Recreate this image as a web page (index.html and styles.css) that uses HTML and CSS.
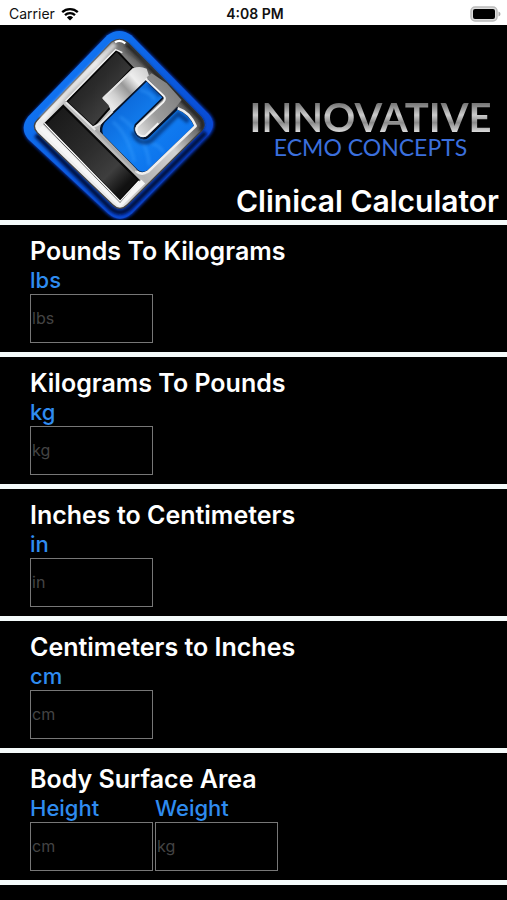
FILE: index.html
```html
<!DOCTYPE html>
<html lang="en">
<head>
    <meta charset="UTF-8">
    <meta name="viewport" content="width=device-width, initial-scale=1.0">
    <title>Clinical Calculator</title>
    <link rel="stylesheet" href="styles.css">
</head>
<body>
    <div class="status-bar">
        <div class="carrier">
            <span>Carrier</span>
            <svg width="18" height="14" viewBox="0 0 18 14" aria-hidden="true">
                <path d="M1.2 5.2a11.2 11.2 0 0 1 15.6 0M4 8.2a7.2 7.2 0 0 1 10 0" fill="none" stroke="#000" stroke-width="2.3"/>
                <path d="M5.9 10.4a4.5 4.5 0 0 1 6.2 0L9 13.6z"/>
            </svg>
        </div>
        <div class="time">4:08 PM</div>
        <div class="battery">
            <svg width="31" height="16" viewBox="0 0 31 16" aria-hidden="true">
                <rect x="1" y="1" width="26" height="14" rx="4" fill="#ddd" stroke="#bbb" stroke-width="1.5"/>
                <rect x="3" y="3" width="22" height="10" rx="2"/>
                <path d="M28.500 5.500q2 .8 2 2.500t-2 2.500z" fill="#aaa"/>
            </svg>
        </div>
    </div>

    <header class="header">
        <svg class="logo" viewBox="0 75 690 585" role="img" aria-label="Innovative ECMO Concepts">
            <defs>
                <linearGradient id="rim" x1="0" y1="0" x2="1" y2="1">
                    <stop offset="0" stop-color="#1687ff"/>
                    <stop offset=".5" stop-color="#0a5be0"/>
                    <stop offset="1" stop-color="#0638c8"/>
                </linearGradient>
                <linearGradient id="chrome" gradientUnits="userSpaceOnUse" x1="230" y1="520" x2="530" y2="250">
                    <stop offset="0" stop-color="#f2f2f2"/>
                    <stop offset=".35" stop-color="#b4b4b4"/>
                    <stop offset=".65" stop-color="#d2d2d2"/>
                    <stop offset=".82" stop-color="#858585"/>
                    <stop offset="1" stop-color="#3c3c3c"/>
                </linearGradient>
                <linearGradient id="panel" x1="0" y1="0" x2="1" y2="1">
                    <stop offset="0" stop-color="#151515"/>
                    <stop offset=".45" stop-color="#2b2b2b"/>
                    <stop offset=".7" stop-color="#3e3e3e"/>
                    <stop offset=".85" stop-color="#111"/>
                </linearGradient>
                <linearGradient id="water" x1="0" y1="0" x2="1" y2="1">
                    <stop offset="0" stop-color="#0758c8"/>
                    <stop offset=".5" stop-color="#1380f2"/>
                    <stop offset="1" stop-color="#0668e8"/>
                </linearGradient>
                <linearGradient id="bar" gradientUnits="userSpaceOnUse" x1="310" y1="330" x2="450" y2="205">
                    <stop offset="0" stop-color="#fff"/>
                    <stop offset=".3" stop-color="#cfcfcf"/>
                    <stop offset=".5" stop-color="#999"/>
                    <stop offset=".7" stop-color="#eee"/>
                    <stop offset="1" stop-color="#c8c8c8"/>
                </linearGradient>
                <linearGradient id="hook" gradientUnits="userSpaceOnUse" x1="420" y1="400" x2="560" y2="290">
                    <stop offset="0" stop-color="#ddd"/>
                    <stop offset=".4" stop-color="#9c9c9c"/>
                    <stop offset="1" stop-color="#7c7c7c"/>
                </linearGradient>
                <filter id="glow" x="-20%" y="-20%" width="140%" height="140%">
                    <feGaussianBlur stdDeviation="5"/>
                </filter>
            </defs>

            <!-- blue rim -->
            <path d="M320 105Q358 78 396 105L628 340Q658 373 628 408L398 642Q360 675 322 642L84 420Q56 385 84 350z" fill="#0838c0" filter="url(#glow)"/>
            <path d="M322 106Q358 80 394 106L626 342Q652 373 626 404L396 640Q360 672 324 640L84 417Q58 385 84 350z" fill="url(#rim)"/>
            <path d="M108 405L333 626Q360 648 387 626L617 398" fill="none" stroke="#020b3c" stroke-width="14" filter="url(#glow)"/>

            <!-- metal frame -->
            <path d="M335 126Q360 110 383 128L603 352Q620 374 603 394L382 614Q360 636 338 614L112 398Q94 378 112 360z" fill="url(#chrome)" stroke="#444" stroke-width="4"/>
            <path d="M378 132L600 356Q615 374 600 391" fill="none" stroke="#1c1c1c" stroke-width="10" filter="url(#glow)"/>
            <path d="M345 132L215 262L125 358" fill="none" stroke="#fff" stroke-width="16" opacity=".6" filter="url(#glow)"/>
            <path d="M345 127Q360 117 376 130" fill="none" stroke="#fff" stroke-width="7"/>
            <path d="M122 382L360 612L430 545" fill="none" stroke="#f6f6f6" stroke-width="16" stroke-linejoin="round"/>
            <path d="M375 150L450 200" stroke="#444" stroke-width="9" opacity=".6" filter="url(#glow)"/>

            <!-- dark panels -->
            <path d="M350 152L398 203L313 292L333 320L280 380L200 306z" fill="url(#panel)" stroke="#050505" stroke-width="6"/>
            <path d="M196 304L347 149L367 158" fill="none" stroke="#eee" stroke-width="4"/>
            <path d="M190 318L415 540L360 603L135 372z" fill="url(#panel)" stroke="#080808" stroke-width="7"/>
            <path d="M133 370L360 604L417 543" fill="none" stroke="#fff" stroke-width="4"/>

            <!-- blue window -->
            <path d="M440 240L492 292L407 375Q399 391 415 408Q432 421 445 409L532 325Q568 338 586 378L445 513Q427 525 411 512L306 405Q298 385 312 365z" fill="url(#water)" stroke="#061329" stroke-width="7"/>
            <path d="M338 365Q382 400 403 485M360 350Q440 405 448 496M450 428Q482 438 490 457M420 270Q455 278 463 300" fill="none" stroke="#3ba0ff" stroke-width="9" opacity=".4" filter="url(#glow)"/>
            <path d="M400 395Q410 435 450 424L535 341L565 365" fill="none" stroke="#001b55" stroke-width="14" opacity=".6" filter="url(#glow)"/>
            <path d="M445 250L480 288" fill="none" stroke="#001b55" stroke-width="10" opacity=".5" filter="url(#glow)"/>

            <!-- bars around the window -->
            <path d="M400 205Q418 196 440 206L448 230L338 336L328 314L308 295z" fill="url(#bar)"/>
            <path d="M440 232L496 290L409 376Q401 391 414 404Q428 415 440 405L528 320L545 300L500 250L455 220z" fill="url(#hook)"/>
            <path d="M437 236L492 289Q498 296 490 306L412 379Q405 389 414 402Q430 415 441 403L475 370" fill="none" stroke="#f2f2f2" stroke-width="6" stroke-linejoin="round"/>
            <path d="M533 325Q570 338 587 378L444 515Q425 527 409 514" fill="none" stroke="#eee" stroke-width="8" stroke-linejoin="round"/>
            <path d="M409 514L278 382L197 306M278 382L302 370L338 334M336 333L328 314L310 294L401 206" fill="none" stroke="#e5e5e5" stroke-width="6" stroke-linejoin="round"/>
            <path d="M287 389L407 512" stroke="#aaa" stroke-width="10"/>
        </svg>
        <div class="header-text">
            <div class="brand">INNOVATIVE</div>
            <div class="brand-sub">ECMO CONCEPTS</div>
            <h1>Clinical Calculator</h1>
        </div>
    </header>

    <main>
        <section class="calc">
            <h2>Pounds To Kilograms</h2>
            <div class="fields">
                <div class="field">
                    <label for="lbs">lbs</label>
                    <input type="text" id="lbs" placeholder="lbs">
                </div>
            </div>
        </section>

        <section class="calc">
            <h2>Kilograms To Pounds</h2>
            <div class="fields">
                <div class="field">
                    <label for="kg">kg</label>
                    <input type="text" id="kg" placeholder="kg">
                </div>
            </div>
        </section>

        <section class="calc">
            <h2>Inches to Centimeters</h2>
            <div class="fields">
                <div class="field">
                    <label for="in">in</label>
                    <input type="text" id="in" placeholder="in">
                </div>
            </div>
        </section>

        <section class="calc">
            <h2>Centimeters to Inches</h2>
            <div class="fields">
                <div class="field">
                    <label for="cm">cm</label>
                    <input type="text" id="cm" placeholder="cm">
                </div>
            </div>
        </section>

        <section class="calc">
            <h2>Body Surface Area</h2>
            <div class="fields">
                <div class="field">
                    <label for="height">Height</label>
                    <input type="text" id="height" placeholder="cm">
                </div>
                <div class="field">
                    <label for="weight">Weight</label>
                    <input type="text" id="weight" placeholder="kg">
                </div>
            </div>
        </section>
    </main>
</body>
</html>
```
FILE: styles.css
```css
* {
    box-sizing: border-box;
}
body {
    margin: 0;
    background-color: #000;
    color: #fff;
    font-family: Inter, "Liberation Sans", sans-serif;
}
h1, h2 {
    margin: 0;
    font-weight: 600;
}
.status-bar {
    display: grid;
    grid-template-columns: 1fr auto 1fr;
    align-items: center;
    height: 25px;
    padding: 2px 6px 0 9px;
    background-color: #fff;
    color: #111;
    font-size: 14px;
}
.carrier {
    display: flex;
    align-items: center;
    gap: 6px;
}
.time {
    font-weight: 600;
}
.battery {
    display: flex;
    justify-content: flex-end;
}
.header {
    display: flex;
    justify-content: space-between;
    border-bottom: 5px solid #f4fafa;
}
.logo {
    flex: none;
    width: 230px;
    height: 195px;
}
.header-text {
    display: flex;
    flex-direction: column;
    align-items: center;
    justify-content: flex-end;
    padding-right: 8px;
    white-space: nowrap;
}
.brand,
.brand-sub {
    padding-left: 6px;
    font-family: Lato, sans-serif;
}
.brand {
    font-size: 40px;
    font-weight: 700;
    line-height: 38px;
    background: linear-gradient(#777 15%, #ccc 45%, #8a8a8a 65%, #ddd 90%);
    -webkit-background-clip: text;
    background-clip: text;
    color: transparent;
}
.brand-sub {
    font-size: 23px;
    line-height: 22px;
    color: #3b6fdc;
}
h1 {
    margin-top: 24px;
    font-size: 30px;
    line-height: 38px;
}
.calc {
    padding: 10px 30px 9px;
    border-bottom: 5px solid #f4fafa;
}
h2 {
    font-size: 25px;
    line-height: 32px;
}
.fields {
    display: flex;
    gap: 2px;
}
.field {
    width: 123px;
}
.field label {
    display: block;
    color: #2f8cf0;
    font-size: 22px;
    font-weight: 500;
    line-height: 27px;
}
.field input {
    display: block;
    width: 100%;
    height: 49px;
    padding: 0 1px 2px;
    background-color: #000;
    border: 1px solid #777;
    border-radius: 0;
    color: #fff;
    font-family: inherit;
    font-size: 16px;
}
.field input::placeholder {
    color: #444;
    opacity: 1;
}
```
